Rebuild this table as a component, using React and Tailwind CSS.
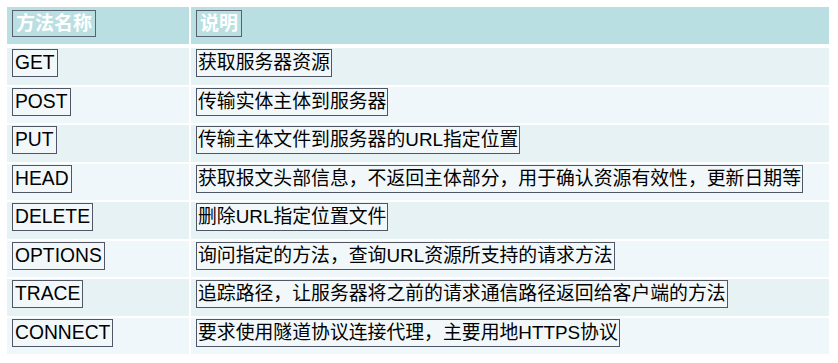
export default function App() {
  const rows = [
    ["GET", "获取服务器资源"],
    ["POST", "传输实体主体到服务器"],
    ["PUT", "传输主体文件到服务器的URL指定位置"],
    ["HEAD", "获取报文头部信息，不返回主体部分，用于确认资源有效性，更新日期等"],
    ["DELETE", "删除URL指定位置文件"],
    ["OPTIONS", "询问指定的方法，查询URL资源所支持的请求方法"],
    ["TRACE", "追踪路径，让服务器将之前的请求通信路径返回给客户端的方法"],
    ["CONNECT", "要求使用隧道协议连接代理，主要用地HTTPS协议"],
  ];
  const font = { fontFamily: '"Liberation Sans", "Noto Sans CJK SC", sans-serif' };
  return (
    <div className="w-[838px] h-[363px] bg-white pt-[7px] pl-[7px]" style={font}>
      <div className="flex flex-col w-[822px]">
        <div className="flex h-[37px] gap-[2px]">
          <div className="w-[182px] bg-[#b9dfe2] pl-[5px] pt-[3px]">
            <span className="inline-block border border-[#59606e] px-[3px] text-[19px] leading-[25px] font-bold text-white">方法名称</span>
          </div>
          <div className="flex-1 bg-[#b9dfe2] pl-[5px] pt-[3px]">
            <span className="inline-block border border-[#59606e] px-[3px] text-[19px] leading-[25px] font-bold text-white">说明</span>
          </div>
        </div>
        <div className="flex flex-col gap-[2px] mt-[4px]">
          {rows.map(([m, d], i) => {
            const bg = i % 2 === 0 ? "bg-[#e6f2f4]" : "bg-[#f0f7fa]";
            return (
              <div key={m} className="flex h-[36.5px] gap-[2px]">
                <div className={`w-[182px] ${bg} pl-[5px] pt-[1px]`}>
                  <span className="inline-block border border-[#4f5666] bg-[#f2f8fa] px-[2px] text-[19.3px] leading-[26px] text-black">{m}</span>
                </div>
                <div className={`flex-1 ${bg} pl-[5px] pt-[1px]`}>
                  <span className="inline-block border border-[#4f5666] bg-[#f2f8fa] px-[1px] text-[18.85px] leading-[26px] text-black whitespace-nowrap">{d}</span>
                </div>
              </div>
            );
          })}
        </div>
      </div>
    </div>
  );
}
